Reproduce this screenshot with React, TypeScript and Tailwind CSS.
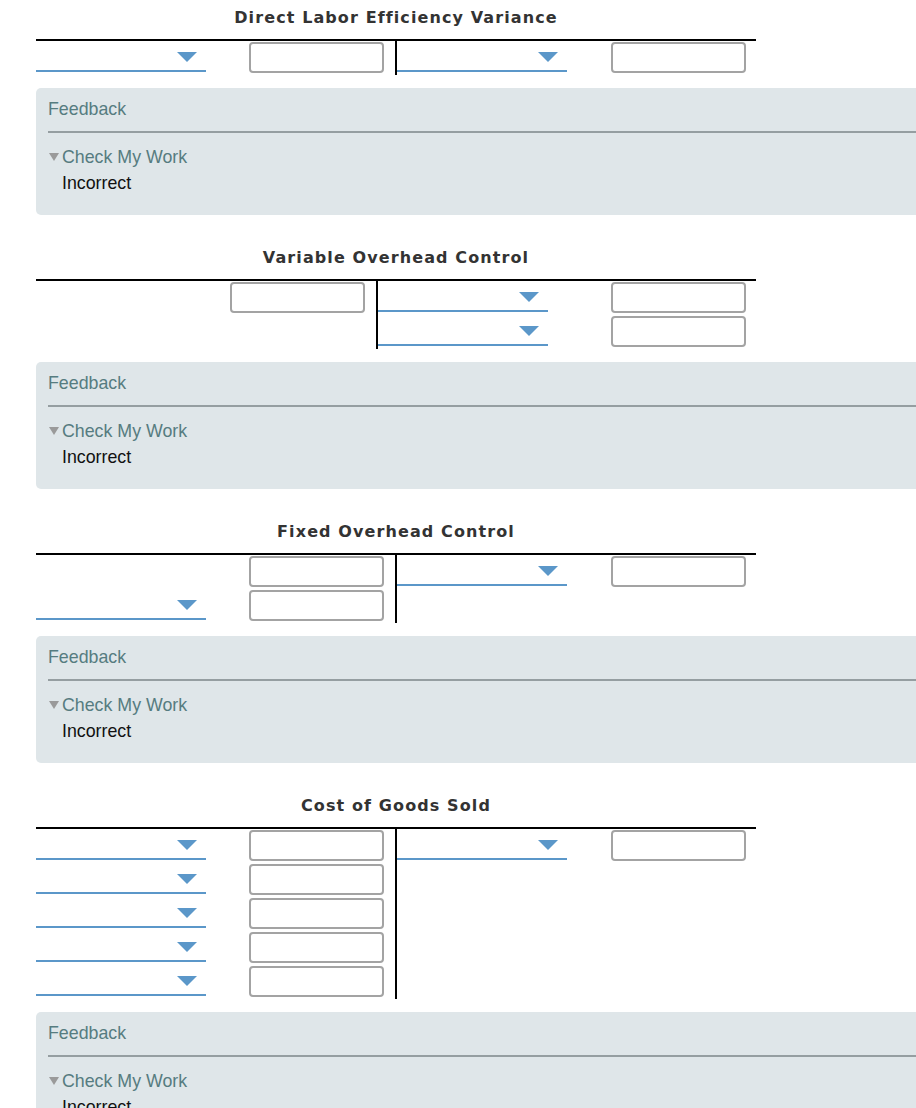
import React from "react";

function Amount() {
  return (
    <div className="mt-px h-[31px] w-[135px] rounded-[4px] border-2 border-[#a3a3a3] bg-white" />
  );
}

function Dropdown() {
  return (
    <div className="flex h-[31px] w-[170px] items-center justify-end border-b-2 border-[#5b97c9] pr-[9px]">
      <svg width="20" height="10" viewBox="0 0 20 10" className="mt-[2px]">
        <path d="M0 0 H20 L10 10 Z" fill="#5b97c9" />
      </svg>
    </div>
  );
}

type Row = { dropdown?: boolean; amount?: boolean };

function Rows({ rows }: { rows: Row[] }) {
  return (
    <>
      {rows.map((r, i) => (
        <div key={i} className="flex h-[34px] items-start justify-between">
          {r.dropdown ? <Dropdown /> : <div />}
          {r.amount ? <Amount /> : <div />}
        </div>
      ))}
    </>
  );
}

function TAccount({
  title,
  leftWidth,
  left,
  right,
  first,
}: {
  title: string;
  leftWidth: string;
  left: Row[];
  right: Row[];
  first?: boolean;
}) {
  return (
    <section className={first ? "pt-[8px]" : "mt-[33px]"}>
      <div className="ml-[36px] w-[720px]">
        <h2 className="mb-[11px] h-[20px] text-center font-['DejaVu_Sans',Verdana,sans-serif] text-[16px] leading-[20px] font-bold tracking-[1.1px] text-[#333]">
          {title}
        </h2>
        <div className="flex border-t-2 border-black">
          <div className={`${leftWidth} pr-[11px]`}>
            <Rows rows={left} />
          </div>
          <div className="flex-1 border-l-2 border-black pr-[10px]">
            <Rows rows={right} />
          </div>
        </div>
      </div>
      <Feedback />
    </section>
  );
}

function Feedback() {
  return (
    <div className="mt-[13px] ml-[36px] h-[127px] rounded-l-[5px] bg-[#dfe6e9] pt-[10px] pl-[12px] font-['Liberation_Sans',Arial,sans-serif] text-[17.8px] leading-[22px]">
      <p className="text-[#567c80]">Feedback</p>
      <div className="mt-[11px] h-[2px] bg-[#959ea1]" />
      <div className="mt-[13px] flex items-center text-[#567c80]">
        <svg width="12" height="8" viewBox="0 0 12 8" className="mr-px ml-px">
          <path d="M0 0 H10 L5 8 Z" fill="#9a9a9a" />
        </svg>
        <span>Check My Work</span>
      </div>
      <p className="mt-[4px] pl-[14px] text-[#111]">Incorrect</p>
    </div>
  );
}

export default function App() {
  const pair = { dropdown: true, amount: true };
  return (
    <div className="h-[1108px] w-[916px] overflow-hidden bg-white">
      <TAccount
        first
        title="Direct Labor Efficiency Variance"
        leftWidth="w-[359px]"
        left={[pair]}
        right={[pair]}
      />
      <TAccount
        title="Variable Overhead Control"
        leftWidth="w-[340px]"
        left={[{ amount: true }]}
        right={[pair, pair]}
      />
      <TAccount
        title="Fixed Overhead Control"
        leftWidth="w-[359px]"
        left={[{ amount: true }, pair]}
        right={[pair]}
      />
      <TAccount
        title="Cost of Goods Sold"
        leftWidth="w-[359px]"
        left={[pair, pair, pair, pair, pair]}
        right={[pair]}
      />
    </div>
  );
}
